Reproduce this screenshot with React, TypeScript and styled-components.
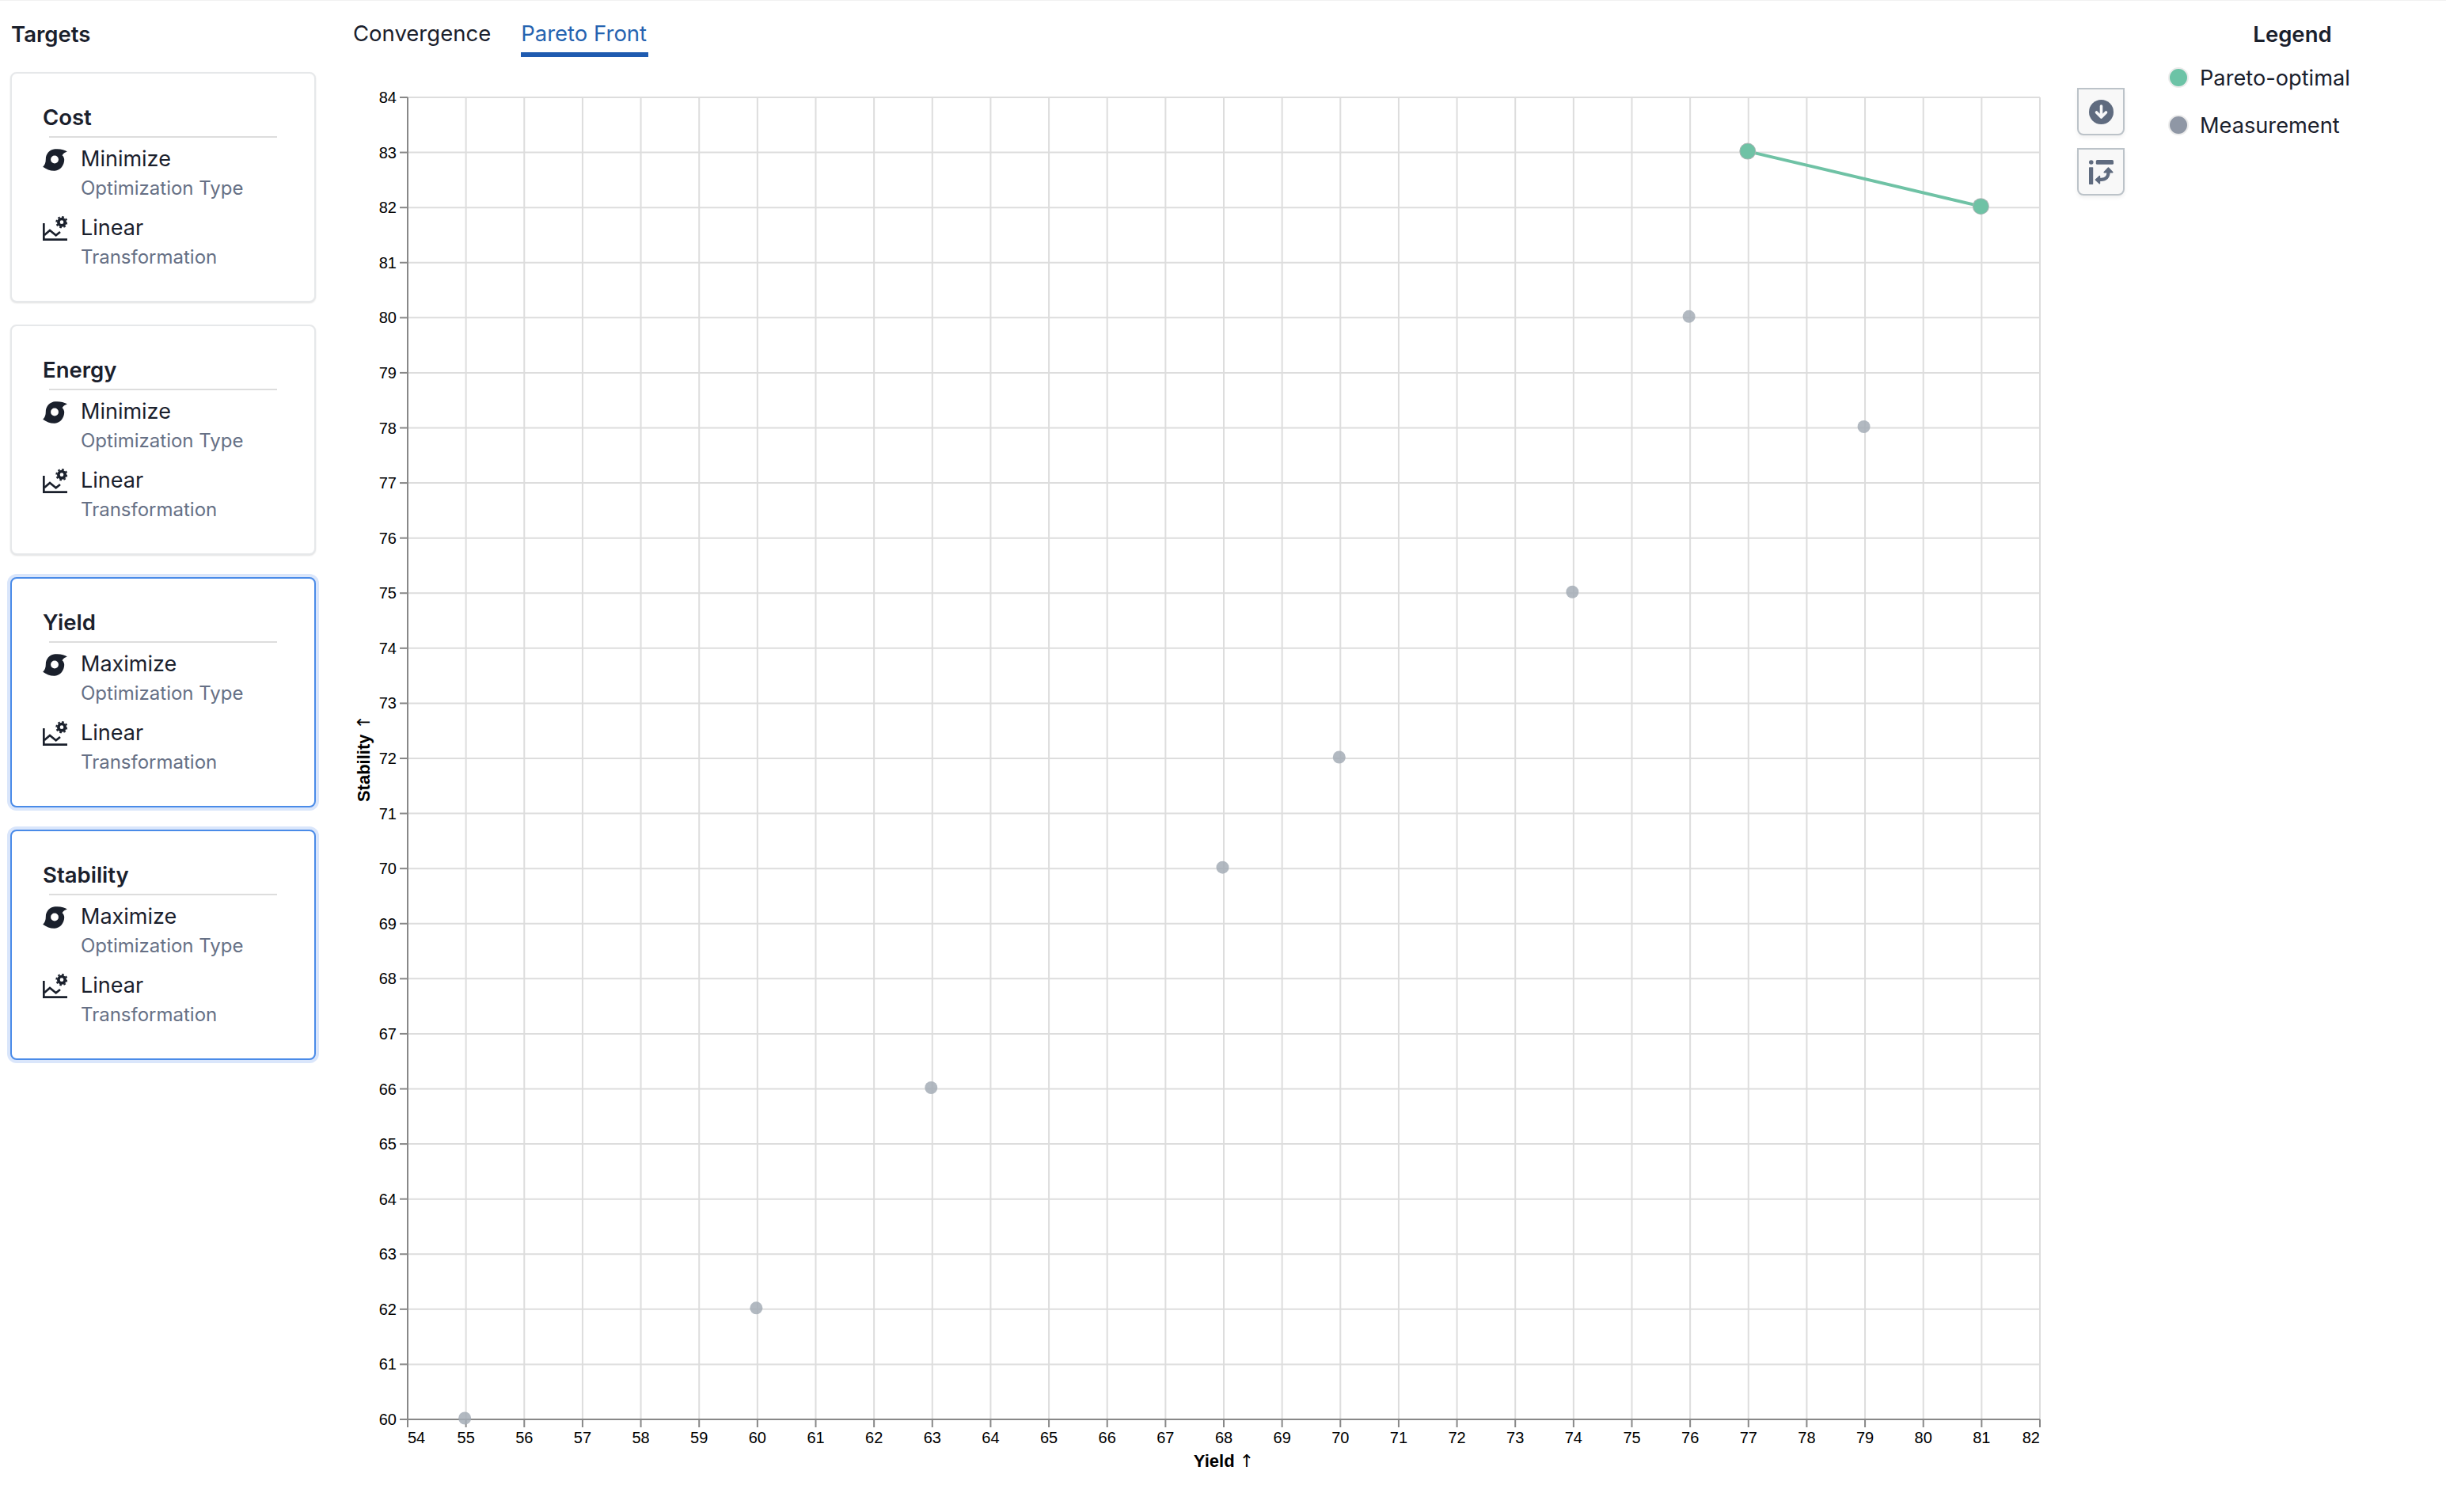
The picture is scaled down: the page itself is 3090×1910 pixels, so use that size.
import React, { FC } from 'react'
import styled, { createGlobalStyle } from 'styled-components'

interface TargetCardProps {
  name: string
  mode: string
  selected?: boolean
}

const targets: TargetCardProps[] = [
  { name: 'Cost', mode: 'Minimize' },
  { name: 'Energy', mode: 'Minimize' },
  { name: 'Yield', mode: 'Maximize', selected: true },
  { name: 'Stability', mode: 'Maximize', selected: true }
]

const measurements = [
  [55, 60], [60, 62], [63, 66], [68, 70], [70, 72], [74, 75], [76, 80], [79, 78]
]
const paretoFront = [[77, 83], [81, 82]]

// Chart scale, in page pixels
const X0 = 515
const X1 = 2577
const Y0 = 1793
const Y1 = 123
const xOf = (v: number) => X0 + ((v - 54) / 28) * (X1 - X0)
const yOf = (v: number) => Y0 - ((v - 60) / 24) * (Y0 - Y1)
const xTicks = Array.from({ length: 29 }, (_, i) => 54 + i)
const yTicks = Array.from({ length: 25 }, (_, i) => 60 + i)

const CycloneIcon = () => (
  <CycloneSvg viewBox="0 0 93 85" width="31" height="28">
    <path
      fillRule="evenodd"
      d="M93 11C84 4 66-1 46 1 26 3 11 19 11 40 11 51 8 62 0 69c14 10 30 16 46 15 21-1 36-21 36-42 0-7-3-13-8-17 6-8 12-12 19-14zM45 26a15 15 0 1 1 0 30 15 15 0 0 1 0-30z"
    />
  </CycloneSvg>
)

const ChartGearIcon = () => (
  <IconSvg viewBox="0 0 93 93" width="31" height="31">
    <path d="M4 27V89H93" fill="none" stroke="currentColor" strokeWidth="8" />
    <path d="M6 72 27 54 50 73 66 60" fill="none" stroke="currentColor" strokeWidth="8" />
    <circle cx="72" cy="23" r="12.5" fill="none" stroke="currentColor" strokeWidth="11" />
    <circle cx="72" cy="23" r="20" fill="none" stroke="currentColor" strokeWidth="6" strokeDasharray="8 7.7" />
  </IconSvg>
)

const DownloadIcon = () => (
  <svg viewBox="0 0 31 31" width="31" height="31">
    <circle cx="15.5" cy="15.5" r="15.5" fill="#5f6b7f" />
    <path
      d="M15.5 8v13.5M9.5 16l6 6 6-6"
      fill="none"
      stroke="#f8f8f9"
      strokeWidth="3.6"
      strokeLinecap="round"
      strokeLinejoin="round"
    />
  </svg>
)

const PivotIcon = () => (
  <svg viewBox="0 0 95 95" width="31" height="31" fill="#5f6b7f">
    <circle cx="8.5" cy="9.5" r="8.5" />
    <rect x="27" y="0" width="68" height="18" rx="5" />
    <rect x="0" y="28" width="16" height="67" rx="2" />
    <path d="M75 44v6c0 15-10 26-28 26H36" fill="none" stroke="#5f6b7f" strokeWidth="13" />
    <path
      d="M75 31 91 48H59zM26 77 41 63v28z"
      stroke="#5f6b7f"
      strokeWidth="5"
      strokeLinejoin="round"
    />
  </svg>
)

const ParetoChart = () => (
  <ChartSvg viewBox="430 72 2180 1838" width="2180" height="1838">
    {yTicks.map(v => (
      <line key={v} x1={X0} x2={X1} y1={yOf(v)} y2={yOf(v)} stroke="#ddd" strokeWidth="2" />
    ))}
    {xTicks.map(v => (
      <line key={v} x1={xOf(v)} x2={xOf(v)} y1={Y1} y2={Y0} stroke="#ddd" strokeWidth="2" />
    ))}
    <line x1={X0} x2={X1} y1={Y0} y2={Y0} stroke="#888" strokeWidth="2" />
    <line x1={X0} x2={X0} y1={Y1} y2={Y0} stroke="#888" strokeWidth="2" />
    {yTicks.map(v => (
      <g key={v}>
        <line x1={X0 - 10} x2={X0} y1={yOf(v)} y2={yOf(v)} stroke="#888" strokeWidth="2" />
        <AxisLabel x={X0 - 14} y={yOf(v) + 7} textAnchor="end">{v}</AxisLabel>
      </g>
    ))}
    {xTicks.map((v, i) => (
      <g key={v}>
        <line x1={xOf(v)} x2={xOf(v)} y1={Y0} y2={Y0 + 10} stroke="#888" strokeWidth="2" />
        <AxisLabel
          x={xOf(v)}
          y={Y0 + 30}
          textAnchor={i === 0 ? 'start' : i === xTicks.length - 1 ? 'end' : 'middle'}
        >
          {v}
        </AxisLabel>
      </g>
    ))}
    <AxisTitle x={(X0 + X1) / 2} y={1853} textAnchor="middle">Yield <AxisArrow>↑</AxisArrow></AxisTitle>
    <AxisTitle transform={`translate(467 ${(Y0 + Y1) / 2}) rotate(-90)`} textAnchor="middle">
      Stability <AxisArrow>↑</AxisArrow>
    </AxisTitle>
    {measurements.map(([x, y]) => (
      <circle key={x} cx={xOf(x) - 1.5} cy={yOf(y) - 1.5} r="8" fill="#a5adb6" fillOpacity="0.85" />
    ))}
    <polyline
      points={paretoFront.map(([x, y]) => `${xOf(x) - 1},${yOf(y) - 1.5}`).join(' ')}
      fill="none"
      stroke="#6fc2a5"
      strokeWidth="4"
    />
    {paretoFront.map(([x, y]) => (
      <g key={x}>
        <circle cx={xOf(x) - 1} cy={yOf(y) - 1.5} r="10.5" fill="#a9b5b3" />
        <circle cx={xOf(x) - 1} cy={yOf(y) - 1.5} r="9.5" fill="#6fc2a5" />
      </g>
    ))}
  </ChartSvg>
)

const TargetCard: FC<TargetCardProps> = ({ name, mode, selected }) => {
  return (
    <Card $selected={selected}>
      <CardTitle>{name}</CardTitle>
      <CardRule />
      <Property>
        <PropertyIcon><CycloneIcon /></PropertyIcon>
        <PropertyText>
          <PropertyValue>{mode}</PropertyValue>
          <PropertyLabel>Optimization Type</PropertyLabel>
        </PropertyText>
      </Property>
      <Property>
        <PropertyIcon><ChartGearIcon /></PropertyIcon>
        <PropertyText>
          <PropertyValue>Linear</PropertyValue>
          <PropertyLabel>Transformation</PropertyLabel>
        </PropertyText>
      </Property>
    </Card>
  )
}

export default function App() {
  return (
    <Page>
      <GlobalStyle />
      <Sidebar>
        <SectionTitle>Targets</SectionTitle>
        <CardList>
          {targets.map(t => <TargetCard key={t.name} {...t} />)}
        </CardList>
      </Sidebar>
      <Main>
        <Tabs>
          <Tab>Convergence</Tab>
          <Tab $active>Pareto Front</Tab>
        </Tabs>
        <ParetoChart />
      </Main>
      <Tools>
        <ToolButton aria-label="Download"><DownloadIcon /></ToolButton>
        <ToolButton aria-label="Swap axes"><PivotIcon /></ToolButton>
      </Tools>
      <Legend>
        <LegendTitle>Legend</LegendTitle>
        <LegendRow>
          <LegendDot $color="#6cc3a6" />
          Pareto-optimal
        </LegendRow>
        <LegendRow>
          <LegendDot $color="#8f97a5" />
          Measurement
        </LegendRow>
      </Legend>
    </Page>
  )
}

// Styles
const GlobalStyle = createGlobalStyle`
  html, body {
    margin: 0;
    padding: 0;
    background: #fff;
  }

  body {
    font-family: Inter, 'Noto Sans', sans-serif;
    color: #1a202c;
  }
`

const Page = styled.div`
  display: flex;
  width: 3090px;
  height: 1910px;
  box-sizing: border-box;
  overflow: hidden;
  box-shadow: inset 0 1px 0 #f1f1f1;
`

const Sidebar = styled.aside`
  flex: 0 0 430px;
  box-sizing: border-box;
  padding: 23px 31px 0 13px;
`

const SectionTitle = styled.h2`
  margin: 0 0 28px 1px;
  font-size: 27.5px;
  line-height: 40px;
  font-weight: 600;
`

const CardList = styled.div`
  display: flex;
  flex-direction: column;
  gap: 28px;
`

const Card = styled.section<{ $selected?: boolean }>`
  height: 291px;
  box-sizing: border-box;
  padding: 37px 47px 0 39px;
  border-radius: 8px;
  background: #fff;
  border: 2px solid ${p => (p.$selected ? '#4a8be8' : '#e6e8ea')};
  box-shadow: ${p => (p.$selected ? '0 0 0 4px #dae6fb' : '0 1px 2px rgba(0, 0, 0, 0.12)')};
`

const CardTitle = styled.h3`
  margin: 0;
  font-size: 27.5px;
  line-height: 36px;
  font-weight: 600;
`

const CardRule = styled.div`
  height: 2px;
  margin: 6px 0 8px 8px;
  background: #dddddd;
`

const Property = styled.div`
  display: flex;
  gap: 17px;
  height: 87px;
`

const PropertyIcon = styled.div`
  flex: 0 0 31px;
  padding-top: 4px;
  color: #1a202c;
`

const IconSvg = styled.svg`
  display: block;
  fill: currentColor;
`

const CycloneSvg = styled(IconSvg)`
  margin-top: 2px;
`

const PropertyText = styled.div`
  display: flex;
  flex-direction: column;
`

const PropertyValue = styled.span`
  font-size: 27px;
  line-height: 37px;
`

const PropertyLabel = styled.span`
  font-size: 24px;
  line-height: 37px;
  color: #667085;
`

const Main = styled.main`
  flex: 0 0 2180px;
`

const Tabs = styled.nav`
  display: flex;
  gap: 36px;
  height: 72px;
  box-sizing: border-box;
  padding: 24px 0 0 16px;
`

const Tab = styled.div<{ $active?: boolean }>`
  box-sizing: border-box;
  height: 48px;
  padding-right: 2px;
  font-size: 27.5px;
  line-height: 36px;
  color: ${p => (p.$active ? '#2563b0' : '#1a202c')};
  border-bottom: 6px solid ${p => (p.$active ? '#1f5bb0' : 'transparent')};
`

const ChartSvg = styled.svg`
  display: block;
`

const AxisLabel = styled.text`
  font-family: 'Liberation Sans', Arial, sans-serif;
  font-size: 20px;
  fill: #000;
`

const AxisTitle = styled.text`
  font-family: 'Liberation Sans', Arial, sans-serif;
  font-size: 22px;
  font-weight: 700;
  fill: #000;
`

const AxisArrow = styled.tspan`
  font-family: 'DejaVu Sans', sans-serif;
  font-weight: 400;
`

const Tools = styled.div`
  flex: 0 0 60px;
  display: flex;
  flex-direction: column;
  gap: 16px;
  margin: 111px 0 0 14px;
`

const ToolButton = styled.button`
  display: flex;
  align-items: center;
  justify-content: center;
  width: 60px;
  height: 60px;
  padding: 0;
  background: #f8f8f8;
  border: 2px solid #bcc3c9;
  border-radius: 0 0 8px 8px;
  box-shadow: 0 3px 5px rgba(0, 0, 0, 0.06);
`

const Legend = styled.aside`
  width: 314px;
  margin-left: 55px;
  padding-top: 23px;
`

const LegendTitle = styled.h2`
  margin: 0 0 5px;
  font-size: 27.5px;
  line-height: 40px;
  font-weight: 600;
  text-align: center;
`

const LegendRow = styled.div`
  display: flex;
  align-items: center;
  gap: 14px;
  height: 60px;
  font-size: 27.2px;
`

const LegendDot = styled.span<{ $color: string }>`
  width: 22px;
  height: 22px;
  border-radius: 50%;
  background: ${p => p.$color};
  border: 2px solid #ececec;
`
